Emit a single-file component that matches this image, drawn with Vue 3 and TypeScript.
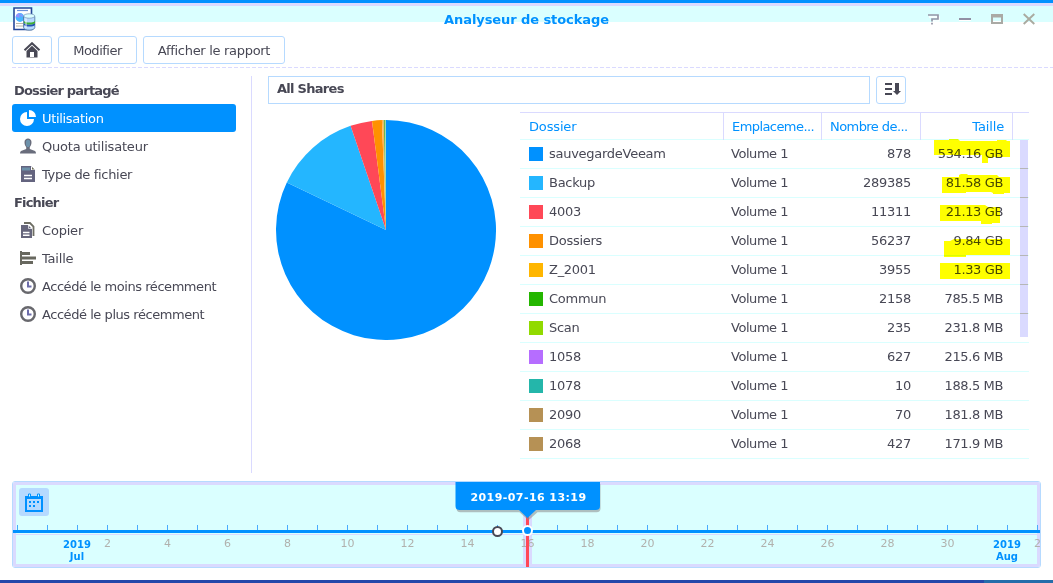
<script setup lang="ts">
interface Share {
  name: string
  count: string
  size: string
  color: string
}

const shares: Share[] = [
  { name: 'sauvegardeVeeam', count: '878', size: '534.16 GB', color: '#0091ff' },
  { name: 'Backup', count: '289385', size: '81.58 GB', color: '#24b6ff' },
  { name: '4003', count: '11311', size: '21.13 GB', color: '#ff4857' },
  { name: 'Dossiers', count: '56237', size: '9.84 GB', color: '#ff9100' },
  { name: 'Z_2001', count: '3955', size: '1.33 GB', color: '#ffb600' },
  { name: 'Commun', count: '2158', size: '785.5 MB', color: '#24b600' },
  { name: 'Scan', count: '235', size: '231.8 MB', color: '#91da00' },
  { name: '1058', count: '627', size: '215.6 MB', color: '#b66dff' },
  { name: '1078', count: '10', size: '188.5 MB', color: '#24b6aa' },
  { name: '2090', count: '70', size: '181.8 MB', color: '#b69155' },
  { name: '2068', count: '427', size: '171.9 MB', color: '#b69155' },
]

const stops = [0, 0.8211, 0.9478, 0.9797, 0.9941, 0.9966, 0.9986, 1]
const sliceColors = ['#0091ff', '#24b6ff', '#ff4857', '#ff9100', '#ffb655', '#6db655', '#91daaa']

function slice(i: number): string {
  const point = (t: number) => {
    const a = t * Math.PI * 2
    return `${(110 + 110 * Math.sin(a)).toFixed(2)} ${(110 - 110 * Math.cos(a)).toFixed(2)}`
  }
  const large = stops[i + 1] - stops[i] > 0.5 ? 1 : 0
  return `M110 110L${point(stops[i])}A110 110 0 ${large} 1 ${point(stops[i + 1])}Z`
}

const files = [
  { icon: 'copy', label: 'Copier' },
  { icon: 'bars', label: 'Taille' },
  { icon: 'clock', label: 'Accédé le moins récemment' },
  { icon: 'clock', label: 'Accédé le plus récemment' },
]

const days = Array.from({ length: 35 }, (_, i) => {
  const day = i - 1
  if (i === 2) return { month: 'Jul', label: '2019' }
  if (i === 33) return { month: 'Aug', label: '2019' }
  if (i === 34) return { month: '', label: '2' }
  return { month: '', label: i > 2 && day % 2 === 0 ? String(day) : '' }
})
</script>

<template>
  <div class="window">
    <header class="titlebar">
      <svg class="app-icon" width="24" height="25" viewBox="0 0 24 25">
        <path d="M2 1H19.500V22.500H2Z" fill="#fff" stroke="#24489a" stroke-width="1.6" />
        <path d="M5 3.500H16" stroke="#6d91da" stroke-width="1.2" />
        <circle cx="8" cy="10.500" r="4.400" fill="#48b6ff" />
        <path d="M7.500 11V6A5 5 0 0 0 3.500 9.500Z M8.500 6V9.500H11.500Z" fill="#9191ff" />
        <path d="M4 16.500H11M4 19H11" stroke="#b6b6aa" stroke-width="1" />
        <path d="M11.500 9.500V20.500C11.500 24 22.800 24 22.800 20.500V9.500Z" fill="#b6daff" stroke="#48719b" stroke-width=".8" />
        <path d="M12 16C14 18 21 18 23 16V18C21 20 14 20 12 18Z" fill="#2450b6" />
        <path d="M12 14C14 16 21 16 23 14V16C21 18 14 18 12 16Z" fill="#3fae35" />
        <path d="M14 10V21" stroke="#fff" stroke-width="1.500" opacity=".6" />
        <ellipse cx="17.200" cy="9" rx="5.600" ry="2.200" fill="#daffff" stroke="#7191b6" stroke-width=".7" />
      </svg>
      <h1>Analyseur de stockage</h1>
      <div class="controls">
        <svg width="12" height="12" viewBox="0 0 12 12"><path d="M1 2H11V6H5.5V8M5.500 9.500V11.500" fill="none" stroke="#fff" stroke-width="1.5" transform="translate(1 1)" /><path d="M1 1H11V5H5V7.5M5 8.7V10.5" fill="none" stroke="#9595a6" stroke-width="1.7" /></svg>
        <svg width="12" height="12" viewBox="0 0 12 12"><path d="M0 6.500H12" stroke="#fff" stroke-width="1" /><path d="M0 5H12" stroke="#9191a5" stroke-width="2" /></svg>
        <svg width="12" height="12" viewBox="0 0 12 12"><path d="M1 1H11V9H1Z" fill="#daffff" stroke="#aaaaa5" stroke-width="2" /><path d="M1 2H11" stroke="#aaaaa5" stroke-width="3" /><path d="M2 7.500H10" stroke="#fff" /></svg>
        <svg width="12" height="12" viewBox="0 0 12 12"><path d="M.7 0L11.3 10M11.3 0L.7 10" stroke="#aaaaa0" stroke-width="1.9" /></svg>
      </div>
    </header>

    <div class="toolbar">
      <button class="home">
        <svg width="18" height="16" viewBox="0 0 18 16">
          <path d="M1.5 8.2L9 1.2L16.500 8.2" fill="none" stroke="#484855" stroke-width="2" />
          <path d="M3.500 8.9L9 3.7L14.500 8.9V15.6H3.500Z" fill="#484855" />
          <path d="M7 10H11V15H7Z" fill="#fff" />
        </svg>
      </button>
      <button class="edit">Modifier</button>
      <button class="report">Afficher le rapport</button>
    </div>
    <svg class="dashes" width="1041" height="1"><path d="M0 .5H1041" stroke="#dadaff" stroke-dasharray="4 2" /></svg>

    <main>
      <nav>
        <h2>Dossier partagé</h2>
        <a class="active">
          <svg width="16" height="16" viewBox="0 0 16 16"><path d="M7 2A7 7 0 1 0 14 9H7Z M9 0V7H16A7 7 0 0 0 9 0Z" fill="#fff" /></svg>
          <span>Utilisation</span>
        </a>
        <a>
          <svg width="16" height="16" viewBox="0 0 16 16"><path d="M4.5 4C4.5 -.8 11.5 -.8 11.5 4C11.5 7 10.5 8 9.8 9V11L15 13Q16 13.5 16 15.5H0Q0 13.5 1 13L6.2 11V9C5.5 8 4.5 7 4.5 4Z" fill="#696d7c" /><path d="M6 3Q8 .5 10 3V7L9 9H7L6 7Z" fill="#6d91aa" /></svg>
          <span class="quota">Quota utilisateur</span>
        </a>
        <a>
          <svg width="16" height="16" viewBox="0 0 16 16"><path d="M1 0H11L15 4V16H1Z" fill="#64647f" /><path d="M2 1.5H10V4.5H2Z" fill="#6d91aa" /><path d="M11 0V4H15Z" fill="#fff" /><path d="M12 1V3.5H14.5" fill="#6d6d55" /><path d="M4 9.5H12M4 12.5H12" stroke="#fff" stroke-width="1.5" /></svg>
          <span>Type de fichier</span>
        </a>
        <h2>Fichier</h2>
        <a v-for="f in files" :key="f.label">
          <svg v-if="f.icon === 'copy'" width="16" height="16" viewBox="0 0 16 16"><path d="M4 1H10L13.500 4.500V14" fill="none" stroke="#6d6d63" stroke-width="1.8" /><path d="M1 3H8L12 7V16H1Z" fill="#66667c" /><path d="M8.500 3V6.500H12" fill="none" stroke="#fff" stroke-width=".7" /><path d="M3 10.5H9.5M3 13.2H9.5" stroke="#fff" stroke-width="1.4" /></svg>
          <svg v-else-if="f.icon === 'bars'" width="16" height="16" viewBox="0 0 16 16"><path d="M1 1V15" stroke="#68685f" stroke-width="2" /><path d="M1 3.500H10M1 8H16M1 12.500H13" fill="none" stroke="#68685f" stroke-width="3" /></svg>
          <svg v-else width="16" height="16" viewBox="0 0 16 16"><circle cx="8" cy="8" r="6.8" fill="#fff" stroke="#68686d" stroke-width="2.4" /><path d="M8 3.5V8.5H11.5" fill="none" stroke="#6d6daa" stroke-width="2" /></svg>
          <span :class="{ long: f.icon === 'clock', short: f.icon !== 'clock' }">{{ f.label }}</span>
        </a>
      </nav>

      <section>
        <div class="filter">
          <div class="share">All Shares</div>
          <button class="sort">
            <svg width="16" height="13" viewBox="0 0 16 13"><path d="M0 1H7M0 6H7M0 11H7M12 0V8" stroke="#484855" stroke-width="2" /><path d="M10 0H14V8H16L12 12L8 8H10Z" fill="#484855" /></svg>
          </button>
        </div>
        <div class="data">
          <svg class="pie" width="220" height="220" viewBox="0 0 220 220">
            <path v-for="(c, i) in sliceColors" :key="i" :d="slice(i)" :fill="c" />
          </svg>
          <div class="table">
            <div class="row head">
              <span>Dossier</span><span class="ell">Emplaceme...</span><span class="ell">Nombre de...</span><span class="num">Taille</span><span></span>
            </div>
            <div v-for="s in shares" :key="s.name" class="row">
              <span class="name"><i :style="{ background: s.color }"></i>{{ s.name }}</span>
              <span class="volume">Volume 1</span>
              <span class="num">{{ s.count }}</span>
              <span class="num size">{{ s.size }}</span>
            </div>
            <div class="scroll"><b v-for="n in 6" :key="n"></b></div>
            <svg class="marker" width="80" height="145" viewBox="0 0 80 145">
              <path d="M4 2H19V1H28L30 3H67V2H76L77 3H80V19H63V20H58V25H52V17H4Z M12 39H29V37L31 36H37L38 37H67L69 39H80V55H74V56H63V55L61 54H36V55H12Z M10 67H55L58 69H70V85H62V86H51V83H50V83H10Z M14 103H20L24 101H80V117H36V119H14Z M10 125H80V141H10Z" fill="#ffff00" />
            </svg>
          </div>
        </div>
      </section>
    </main>

    <footer>
      <div class="inner">
        <button class="calendar">
          <svg width="18" height="19" viewBox="0 0 18 19"><path d="M1 4H17V18H1Z" fill="none" stroke="#0091ff" stroke-width="2" /><path d="M1 4.5H17" stroke="#0091ff" stroke-width="3" /><path d="M3.5 1H5.5V4H3.5ZM12.5 1H14.5V4H12.5Z" fill="#daffff" stroke="#0091ff" /><path d="M8 9H10M12 9H14M4 9H6M4 13H6M8 13H10" stroke="#0091ff" stroke-width="2" /></svg>
        </button>
        <div class="halo"></div>
        <div class="ticks">
          <div v-for="(d, i) in days" :key="i" class="tick">
            <span :class="{ month: d.month }">{{ d.label }}<br v-if="d.month">{{ d.month }}</span>
          </div>
        </div>
        <div class="axis"></div>
        <div class="cursor"></div>
        <div class="dot previous"></div>
        <div class="dot current"></div>
      </div>
      <svg class="bubble" width="154" height="42" viewBox="0 0 154 42">
        <path d="M5 1H149V25Q149 29 145 29H86L77 37L68 29H9Q5 29 5 25Z" fill="#8a8a8a" opacity=".55" transform="translate(.5 1.2)" />
        <path d="M4.5 0H149V24Q149 28 145 28H85L76.5 36L68 28H8.500Q4.500 28 4.500 24Z" fill="#0091ff" />
      </svg>
      <div class="stamp">2019-07-16 13:19</div>
    </footer>
    <div class="desktop"><i></i></div>
  </div>
</template>

<style>
body { margin: 0; background: #fff; overflow: hidden; }
</style>

<style scoped>
* { box-sizing: border-box; }
.window { position: relative; display: flex; flex-direction: column; width: 1053px; height: 583px; overflow: hidden; background: #fff; color: #484855; font: 13px Verdana, "DejaVu Sans", sans-serif; }
.titlebar { display: flex; align-items: flex-start; height: 36px; padding: 7px 18px 0 12px; background: linear-gradient(#0091ff 3px, #dadaff 3px, #dadaff 6px, #daffff 6px, #daffff 22px, #fff 22px); }
.app-icon { flex: none; }
h1 { flex: 1; margin: 5px 0 0 90px; color: #0091ff; font-size: 13px; line-height: 16px; text-align: center; letter-spacing: -.08px; }
.controls { display: flex; gap: 20px; padding-top: 7px; }
.controls svg { overflow: visible; }
.toolbar { display: flex; gap: 6px; height: 28px; padding-left: 12px; }
button { display: flex; align-items: center; justify-content: center; height: 28px; padding: 0; border: 1px solid #b6daff; border-radius: 3px; background: #fff; color: inherit; font: inherit; }
.home { width: 40px; }
.edit { width: 79px; letter-spacing: -.5px; }
.report { width: 142px; letter-spacing: -.3px; }
.dashes { display: block; flex: none; margin: 3px 0 0 12px; }
main { display: flex; height: 397px; margin: 8px 0 0 12px; }
nav { width: 240px; border-right: 1px solid #dadaff; }
h2 { height: 28px; margin: 0; padding: 1px 0 0 2px; font-size: 13px; line-height: 28px; letter-spacing: -.82px; }
nav a { display: flex; align-items: center; gap: 6px; width: 224px; height: 28px; padding-left: 8px; border-radius: 3px; white-space: nowrap; letter-spacing: -.32px; }
nav a.active { background: #0091ff; color: #fff; }
.quota, .short { letter-spacing: -.2px; }
.long { letter-spacing: -.45px; }
section { flex: none; width: 761px; margin-left: 16px; }
.filter { display: flex; gap: 6px; }
.share { width: 602px; height: 28px; padding-left: 8px; border: 1px solid #b6daff; font-weight: bold; line-height: 24px; letter-spacing: -.72px; }
.sort { width: 30px; padding: 0 0 1px 3px; }
.data { display: flex; margin-top: 8px; }
.pie { flex: none; margin: 8px 24px 0 8px; }
.table { position: relative; width: 509px; letter-spacing: -.27px; }
.row { display: grid; grid-template-columns: 204px 98px 99px 92px 16px; height: 29px; border-bottom: 1px solid #daffff; line-height: 27px; }
.row span { padding-left: 7px; white-space: nowrap; }
.row .num { padding: 0 10px 0 0; text-align: right; }
.row .name { display: flex; align-items: center; gap: 6px; height: 27px; padding-left: 9px; }
.row .volume { letter-spacing: -.45px; }
.row .size { letter-spacing: -.38px; }
.name i { width: 14px; height: 14px; margin-bottom: -1px; }
.head { height: 28px; border-top: 1px solid #dadaff; color: #0091ff; letter-spacing: -.15px; }
.head span { border-right: 1px solid #dadaff; }
.head span:first-child { padding-left: 9px; }
.head span:last-child { border: 0; }
.head .ell { padding-left: 8px; letter-spacing: -.57px; }
.head .num { padding-right: 8px; }
.scroll { position: absolute; top: 28px; right: 1px; width: 8px; height: 197px; background: #dadaff; }
.scroll b { display: block; height: 29px; border-bottom: 1px solid #b6b6b6; }
.marker { position: absolute; top: 26px; right: 19px; mix-blend-mode: multiply; }
footer { position: relative; height: 87px; margin: 8px 12px 0; border: 1px solid #b6daff; border-radius: 3px; }
.inner { position: relative; height: 85px; padding: 6px; overflow: hidden; border-radius: 2px; background: #daffff; box-shadow: inset 0 0 0 3px #dadaff; }
.calendar { width: 30px; height: 28px; border: 0; background: #b6daff; }
.ticks { position: absolute; top: 43px; left: -11px; display: flex; }
.tick { position: relative; flex: none; width: 30px; height: 42px; padding: 11px 0 0 1px; color: #b1b1ad; font-size: 11px; line-height: 16px; text-align: center; }
.tick::before { position: absolute; top: 0; left: 15px; width: 1px; height: 5px; background: #48aaff; content: ""; }
.month { display: block; margin-left: -1px; padding-top: 3px; color: #0091ff; font-size: 10px; font-weight: bold; line-height: 12px; }
.axis { position: absolute; top: 48px; right: 0; left: 0; height: 5px; border-top: 3px solid #0091ff; border-bottom: 1px solid #dadaff; }
.halo { position: absolute; top: 33px; left: 510px; width: 9px; height: 52px; background: #dadaff; }
.cursor { position: absolute; top: 33px; left: 513px; width: 3px; height: 52px; background: #ff4857; }
.dot { position: absolute; width: 11px; height: 11px; border-radius: 50%; }
.previous { top: 44px; left: 479px; border: 2px solid #484855; background: #fff; }
.current { top: 43px; left: 509px; border: 2px solid #fff; background: #0091ff; }
.bubble { position: absolute; top: 0; left: 438px; }
.stamp { position: absolute; top: 0; left: 443px; width: 145px; color: #fff; font-size: 11px; font-weight: bold; line-height: 31px; text-align: center; letter-spacing: .43px; }
.desktop { height: 3px; margin-top: 12px; background: #2448aa; }
.desktop i { display: block; width: 69px; height: 3px; margin-left: 984px; background: #246daa; }
</style>
